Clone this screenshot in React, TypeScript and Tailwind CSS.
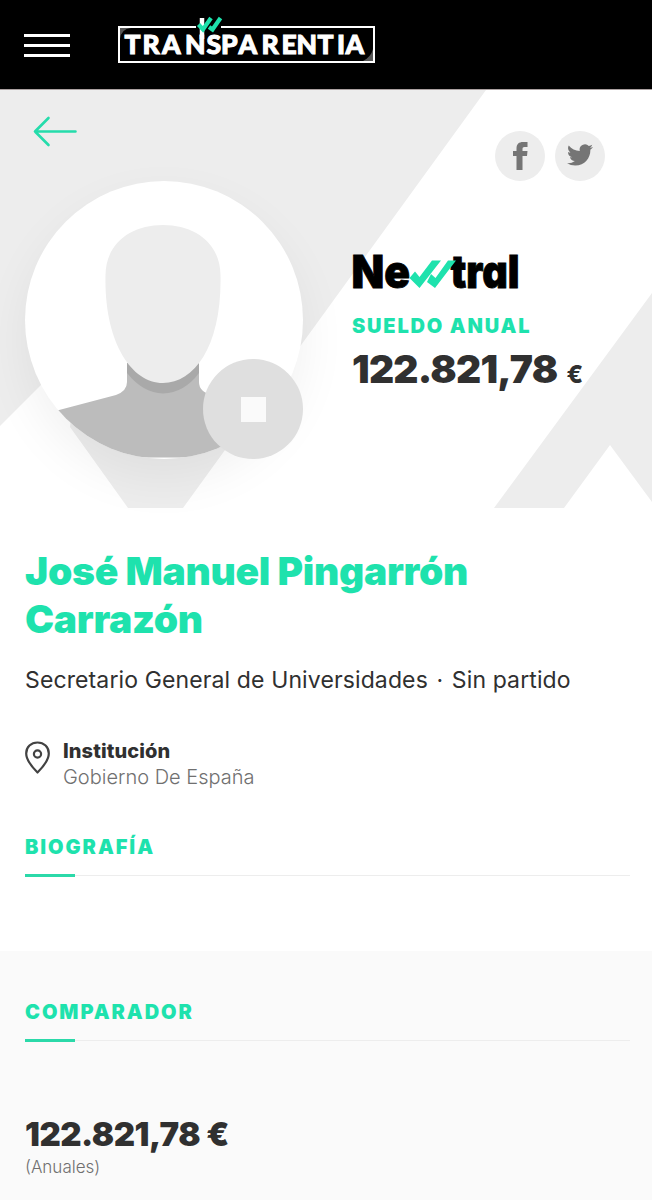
import React from "react";

function MenuIcon() {
  return (
    <div className="flex w-[46px] flex-col gap-[7px]">
      <span className="h-[3px] bg-white" />
      <span className="h-[3px] bg-white" />
      <span className="h-[3px] bg-white" />
    </div>
  );
}

function TransparentiaLogo() {
  return (
    <svg width="260" height="50" viewBox="0 0 260 50" className="font-[Lato,sans-serif]">
      <path d="M3 24 V13 H14 Q4 14 3 24Z" fill="#555" />
      <path d="M256 34 V46 H246 Q254 42 256 34Z" fill="#555" />
      <rect x="2" y="12" width="255" height="35" fill="none" stroke="#fff" strokeWidth="2" />
      <rect x="79" y="9" width="25" height="6" fill="#000" />
      <text
        x="7.500 25.500 45 68 89.500 104 121.500 144.500 164.500 179.500 200.500 220 228.500"
        y="39"
        fill="#fff"
        stroke="#fff"
        strokeWidth="1"
        fontSize="26.500"
        fontWeight="900"
      >
        TRANSPARENTIA
      </text>
      <path d="M85 3V24" stroke="#fff" strokeWidth="4.500" />
      <path d="M81.500 9.500L86 14.500L94 3M92 12L95.500 14.500L103.500 3" fill="none" stroke="#1ee2ad" strokeWidth="4.200" />
    </svg>
  );
}

function NewtralLogo() {
  return (
    <svg width="170" height="38" viewBox="0 0 170 38" className="overflow-visible font-[Inter,sans-serif] [font-feature-settings:'cv11'_1]">
      <g stroke="#000" strokeWidth="0.900">
        <text x="-0.500" y="35.500" fontSize="46" fontWeight="900" textLength="58.500" lengthAdjust="spacingAndGlyphs">Ne</text>
        <text x="98.500" y="35.500" fontSize="46" fontWeight="900" textLength="69" lengthAdjust="spacingAndGlyphs">tral</text>
      </g>
      <path d="M57.500 26L63 19.500L67.500 25L80 8.500H89L67.500 36Z" fill="#1ee2ad" />
      <path d="M75 30L79 22L83.500 26L96 8.500H104L83 36Z" fill="#1ee2ad" />
    </svg>
  );
}

function HeroShapes() {
  return (
    <svg className="absolute inset-0" width="652" height="418" viewBox="0 0 652 418">
      <path d="M0 0H486L183 418H128L70 337L80 256L0 336Z" fill="#ededed" />
      <path d="M652 203L494 418H564L610 355L652 412Z" fill="#ededed" />
    </svg>
  );
}

function Avatar() {
  return (
    <div className="relative h-[278px] w-[278px] rounded-full bg-white shadow-[0_20px_50px_rgba(0,0,0,0.06)]">
      <svg width="278" height="278" viewBox="0 0 278 278">
        <defs>
          <clipPath id="disc">
            <circle cx="139" cy="139" r="139" />
          </clipPath>
        </defs>
        <g clipPath="url(#disc)">
          <path d="M102 182V201Q102 210 91 214L0 238V276.500H278V238L187 214Q174 211 174 201V182Z" fill="#bcbcbc" />
          <path d="M102 182V192Q118 212 138 212.500Q159 212 174 192V182Z" fill="#a9a9a9" />
          <path d="M138 44C170 44 195 62 195.500 94C197 164 170 202 138 202C106 202 79 160 80.500 94C81 62 106 44 138 44Z" fill="#ededed" />
        </g>
      </svg>
      <div className="absolute right-0 bottom-0 flex h-[100px] w-[100px] items-center justify-center rounded-full bg-[#dfdfdf]">
        <span className="h-[25px] w-[25px] bg-[#fafafa]" />
      </div>
    </div>
  );
}

function ShareButtons() {
  return (
    <div className="flex gap-[10px]">
      <a className="flex h-[50px] w-[50px] items-center justify-center rounded-full bg-[#ededed]">
        <svg width="50" height="50" viewBox="0 0 50 50" fill="#757575">
          <path d="M21.500 39V25H18V20H21.500V17.500C21.500 13 24 11 28 11H32.500V16H29.500C28 16 27.500 16.700 27.500 18V20H32.500L32 25H27.500V39Z" />
        </svg>
      </a>
      <a className="flex h-[50px] w-[50px] items-center justify-center rounded-full bg-[#ededed]">
        <svg className="-mt-[2px]" width="26" height="26" viewBox="0 0 24 24" fill="#757575">
          <path d="M23.953 4.570a10 10 0 01-2.825.775 4.958 4.958 0 002.163-2.723c-.951.555-2.005.959-3.127 1.184a4.920 4.920 0 00-8.384 4.482C7.690 8.095 4.067 6.130 1.640 3.162a4.822 4.822 0 00-.666 2.475c0 1.710.87 3.213 2.188 4.096a4.904 4.904 0 01-2.228-.616v.06a4.923 4.923 0 003.946 4.827 4.996 4.996 0 01-2.212.085 4.936 4.936 0 004.604 3.417 9.867 9.867 0 01-6.102 2.105c-.39 0-.779-.023-1.170-.067a13.995 13.995 0 007.557 2.209c9.053 0 13.998-7.496 13.998-13.985 0-.21 0-.42-.015-.63A9.935 9.935 0 0024 4.590z" />
        </svg>
      </a>
    </div>
  );
}

function SectionTitle({ children }: { children: React.ReactNode }) {
  return (
    <div>
      <h2 className="text-[20px] leading-[24px] font-black tracking-[1.950px] text-[#1ee2ad]">{children}</h2>
      <div className="mt-[15px] flex h-[3px] w-[605px] items-center bg-transparent">
        <span className="h-[3px] w-[50px] bg-[#2bd9a9]" />
        <span className="h-px flex-1 bg-[#ededed]" />
      </div>
    </div>
  );
}

export default function App() {
  return (
    <main className="h-[1200px] w-[652px] overflow-hidden bg-white font-[Inter,sans-serif] text-[#303030]">
      <header className="flex h-[90px] items-start border-b border-[#aaa0a0] bg-black pl-6">
        <div className="pt-[34px]">
          <MenuIcon />
        </div>
        <div className="pt-[15px] pl-[47px]">
          <TransparentiaLogo />
        </div>
      </header>

      <section className="relative h-[418px]">
        <HeroShapes />
        <div className="relative flex h-[91px] items-start justify-between pr-[47px] pl-[33px]">
          <svg className="mt-[26px]" width="44" height="31" viewBox="0 0 44 31" fill="none" stroke="#25dcab" strokeWidth="2.600" strokeLinecap="round" strokeLinejoin="round">
            <path d="M42.500 15.500H2M15.500 2L2 15.500L15.500 29" />
          </svg>
          <div className="mt-[41px]">
            <ShareButtons />
          </div>
        </div>
        <div className="relative flex pl-[25px]">
          <Avatar />
          <div className="flex flex-col pt-[71px] pl-[49px]">
            <NewtralLogo />
            <p className="mt-[24px] text-[20px] leading-[24px] font-black tracking-[1.800px] whitespace-nowrap text-[#1ee2ad]">
              SUELDO ANUAL
            </p>
            <p className="mt-[7px] text-[39px] leading-[48px] font-black whitespace-nowrap">
              <span className="tracking-[-0.750px]">122.821,78</span>
              <span className="ml-[9px] text-[24px] font-extrabold">€</span>
            </p>
          </div>
        </div>
      </section>

      <section className="h-[443px] px-[25px] pt-[39px]">
        <h1 className="text-[39px] leading-[48px] font-black tracking-[-0.300px] text-[#1ee2ad]">
          José Manuel Pingarrón
          <br />
          Carrazón
        </h1>
        <p className="mt-[21px] text-[23px] leading-[32px] tracking-[0.120px] whitespace-nowrap">
          Secretario General de Universidades <span className="mx-[2px]">·</span> Sin partido
        </p>
        <div className="mt-[42px] flex gap-[13px]">
          <svg className="mt-[3px]" width="25" height="33" viewBox="0 0 25 33" fill="none" stroke="#424242" strokeWidth="2.200">
            <path d="M12.500 31.500C9 28 1.200 20 1.200 12.500C1.200 6 6 1.500 12.500 1.500S23.800 6 23.800 12.500C23.800 20 16 28 12.500 31.500Z" strokeLinejoin="round" />
            <circle cx="12.500" cy="13" r="3.600" />
          </svg>
          <div className="text-[20px] leading-[26px]">
            <p className="font-extrabold tracking-[0.100px]">Institución</p>
            <p className="font-light text-[#707070]">Gobierno De España</p>
          </div>
        </div>
        <div className="mt-[45px]">
          <SectionTitle>BIOGRAFÍA</SectionTitle>
        </div>
      </section>

      <section className="h-[249px] bg-[#fafafa] px-[25px] pt-[49px]">
        <SectionTitle>COMPARADOR</SectionTitle>
        <p className="mt-[72px] text-[33px] leading-[40px] font-black tracking-[-0.500px] whitespace-nowrap">122.821,78 €</p>
        <p className="mt-[3px] text-[17px] leading-[20px] font-light text-[#707070]">(Anuales)</p>
      </section>
    </main>
  );
}
